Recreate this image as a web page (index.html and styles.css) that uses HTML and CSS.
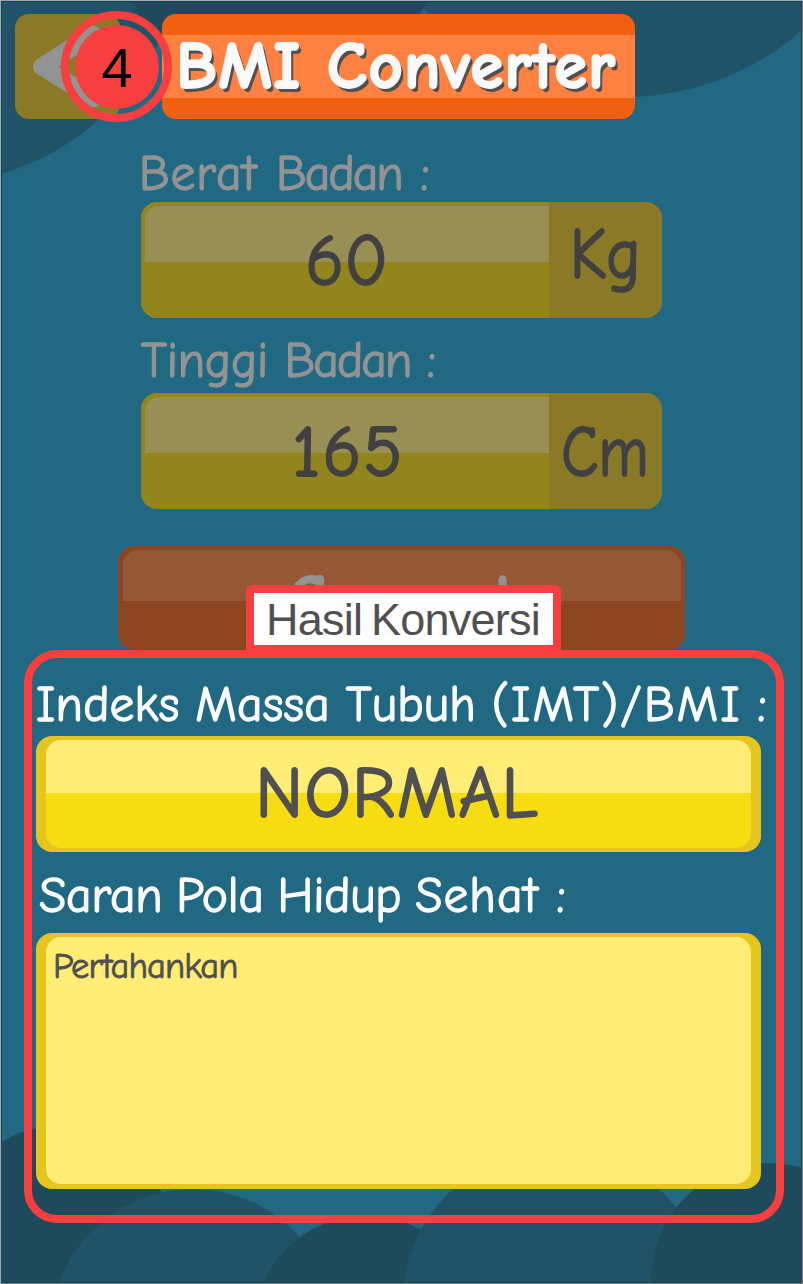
FILE: index.html
```html
<!DOCTYPE html>
<html lang="id">
<head>
<meta charset="utf-8">
<title>BMI Converter</title>
<link rel="stylesheet" href="styles.css">
</head>
<body>
<main class="screen">
  <svg class="backdrop" viewBox="0 0 803 1284" aria-hidden="true">
    <g class="bubble">
      <circle cx="-71" cy="-73" r="257"/>
      <circle cx="624" cy="-174" r="271"/>
    </g>
    <circle class="bubble-dark" cx="279" cy="-72" r="165"/>
    <circle class="bubble-dark" cx="60" cy="1236" r="110.6"/>
    <circle class="bubble" cx="193" cy="1332" r="143"/>
    <circle class="bubble-dark" cx="366" cy="1327" r="111.5"/>
    <circle class="bubble" cx="556" cy="1303" r="153.7"/>
    <circle class="bubble-dark" cx="768" cy="1280" r="117"/>
  </svg>

  <header class="header">
    <div class="back">
      <svg class="back-icon" viewBox="0 0 105 105"><path d="M78 20.500 27 52.500 78 84.500"/></svg>
      <div class="step"><span class="step-disc">4</span></div>
    </div>
    <h1 class="title"><span class="title-text">BMI Converter</span></h1>
  </header>

  <section class="form">
    <div class="label label-weight"><span><b class="loose">Berat</b> <b class="tight">Badan</b> :</span></div>
    <div class="input">
      <div class="input-value"><span class="num-weight">60</span></div>
      <div class="unit unit-kg"><span>Kg</span></div>
    </div>
    <div class="label label-height"><span><b class="loose">Tinggi</b> <b class="tight">Badan</b> :</span></div>
    <div class="input">
      <div class="input-value"><span class="num-height">165</span></div>
      <div class="unit unit-cm"><span>Cm</span></div>
    </div>
    <div class="button"><span class="button-text">Convert</span></div>
  </section>

  <section class="result">
    <div class="callout"><span>Hasil Konversi</span></div>
    <div class="label label-index"><span>Indeks Massa Tubuh <b class="loose">(IMT)/BMI</b> :</span></div>
    <div class="box box-status"><div class="box-face"><span>NORMAL</span></div></div>
    <div class="label label-advice"><span>Saran Pola Hidup <b class="loose">Sehat</b> :</span></div>
    <div class="box box-advice"><div class="box-face"><span>Pertahankan</span></div></div>
  </section>
</main>
</body>
</html>
```
FILE: styles.css
```css
* { box-sizing: border-box; }
body { margin: 0; font-family: "Comic Sans MS", "Comic Neue", "Noto Sans", sans-serif; }
span { display: inline-block; white-space: nowrap; }
b { font-weight: inherit; }

.screen {
  position: relative;
  width: 803px;
  height: 1284px;
  overflow: hidden;
  background: #216882;
  border: 1px solid #a5abab;
  border-right-color: #718389;
  border-bottom-color: #718389;
}
.backdrop { position: absolute; left: -1px; top: -1px; width: 803px; height: 1284px; }
.bubble { fill: #205368; }
.bubble-dark { fill: #1e4a5c; }
.screen::after {
  content: "";
  position: absolute;
  inset: 0;
  border: 1px solid #154458;
}

.header { position: relative; display: flex; gap: 42px; padding: 13px 0 0 14px; z-index: 1; }
.back { position: relative; width: 105px; height: 105px; border-radius: 14px; background: #8a7927; }
.back-icon { display: block; width: 105px; height: 105px; }
.back-icon path { fill: none; stroke: #929393; stroke-width: 18; stroke-linecap: round; stroke-linejoin: round; }
.step {
  position: absolute;
  left: 46px;
  top: -3px;
  z-index: 1;
  display: flex;
  align-items: center;
  justify-content: center;
  width: 111px;
  height: 111px;
  border: 8px solid #f73f3f;
  border-radius: 50%;
}
.step-disc {
  width: 84px;
  height: 84px;
  border-radius: 50%;
  background: #f73f3f;
  color: #000;
  font: 56px/86px "Liberation Sans", Arial, sans-serif;
  text-align: center;
  text-indent: 1px;
}
.title {
  width: 473px;
  height: 105px;
  margin: 0;
  padding-left: 14px;
  border-radius: 14px;
  background: linear-gradient(#f16010 21px, #ff8142 21px 84.500px, #f16010 84.500px);
  color: #fafafa;
  font-size: 67px;
  line-height: 105px;
  font-weight: 700;
  letter-spacing: 1.200px;
  -webkit-text-stroke: 2px currentColor;
  text-shadow: 1px 1px #505050, 2px 2px #505050, 3px 4px #505050;
}

.form { position: relative; width: 521px; margin-left: 140px; }
.label {
  color: #929393;
  font-size: 49.500px;
  line-height: 62px;
  white-space: nowrap;
  -webkit-text-stroke: 1.300px currentColor;
}
.label-weight { height: 83px; padding-top: 24px; text-indent: -1px; }
.label-weight .loose { letter-spacing: 0.900px; }
.label-weight .tight { letter-spacing: -1.900px; }
.label-weight span { word-spacing: 2px; }
.label-height { height: 75px; padding-top: 8px; line-height: 70px; }
.label-height .loose { letter-spacing: -0.200px; }
.label-height .tight { letter-spacing: -1.900px; }
.input {
  display: flex;
  height: 116px;
  border-radius: 16px;
  overflow: hidden;
  background: #8a7927;
  color: #414141;
  font-size: 72px;
  line-height: 119px;
  -webkit-text-stroke: 2px currentColor;
}
.input-value {
  position: relative;
  width: 407.500px;
  background: #93851d;
  text-align: center;
}
.input-value::before {
  content: "";
  position: absolute;
  left: 4px;
  right: 0;
  top: 3.500px;
  height: 56.500px;
  border-top-left-radius: 14px;
  background: #988f54;
}
.input-value span { position: relative; }
.num-weight { padding-left: 4px; }
.num-height { padding-left: 7px; letter-spacing: 2px; }
.unit { display: flex; flex: 1; justify-content: center; }
.unit-kg { line-height: 106px; }
.unit-kg span { transform: scaleX(0.9); }
.unit-cm span { transform: scaleX(0.84); }
.button {
  position: relative;
  width: 567px;
  height: 104px;
  margin: 36.500px 0 0 -23px;
  border-radius: 16px;
  background: #8c451f;
  color: #929393;
  font-size: 65px;
  line-height: 104px;
  font-weight: 700;
  letter-spacing: 2px;
  text-align: center;
  -webkit-text-stroke: 2px currentColor;
}
.button::before {
  content: "";
  position: absolute;
  left: 4.500px;
  right: 4.500px;
  top: 4.500px;
  height: 51px;
  border-radius: 15px 15px 0 0;
  background: #965736;
}
.button-text { position: relative; }

.result {
  position: relative;
  width: 760px;
  height: 573px;
  margin-left: 22.500px;
  padding: 18px 0 0 4.500px;
  border: 8px solid #f73f3f;
  border-radius: 33px;
}
.callout {
  position: absolute;
  left: 214px;
  top: -72.500px;
  width: 315px;
  height: 68px;
  border: 8px solid #f73f3f;
  border-radius: 6px 6px 0 0;
  background: #fff;
  color: #505050;
  font: 45px/53px "Liberation Sans", Arial, sans-serif;
  letter-spacing: -0.750px;
  word-spacing: -3px;
  text-align: center;
}
.result .label { color: #fafafa; }
.label-index { height: 60.500px; line-height: 57px; letter-spacing: 0.200px; word-spacing: -1px; }
.label-index .loose { letter-spacing: 2.100px; }
.label-advice { height: 81px; line-height: 88px; letter-spacing: -0.200px; word-spacing: -2.500px; text-indent: 1.500px; }
.label-advice .loose { letter-spacing: 1px; margin-right: 4px; }
.box { width: 725px; padding: 4px 10px; border-radius: 16px; background: #e6c51e; color: #505050; }
.box-face { height: 100%; border-radius: 15px; }
.box-status { height: 116px; }
.box-status .box-face {
  background: linear-gradient(#ffed76 53px, #f7dc11 53px);
  font-size: 72px;
  line-height: 108px;
  letter-spacing: 1.500px;
  text-align: center;
  -webkit-text-stroke: 2px currentColor;
}
.box-status span { margin-left: -2px; }
.box-advice { height: 256px; padding-bottom: 5px; }
.box-advice .box-face {
  padding-left: 7px;
  background: #ffed76;
  font-size: 36.500px;
  line-height: 58px;
  letter-spacing: -0.900px;
  -webkit-text-stroke: 0.800px currentColor;
}
```
